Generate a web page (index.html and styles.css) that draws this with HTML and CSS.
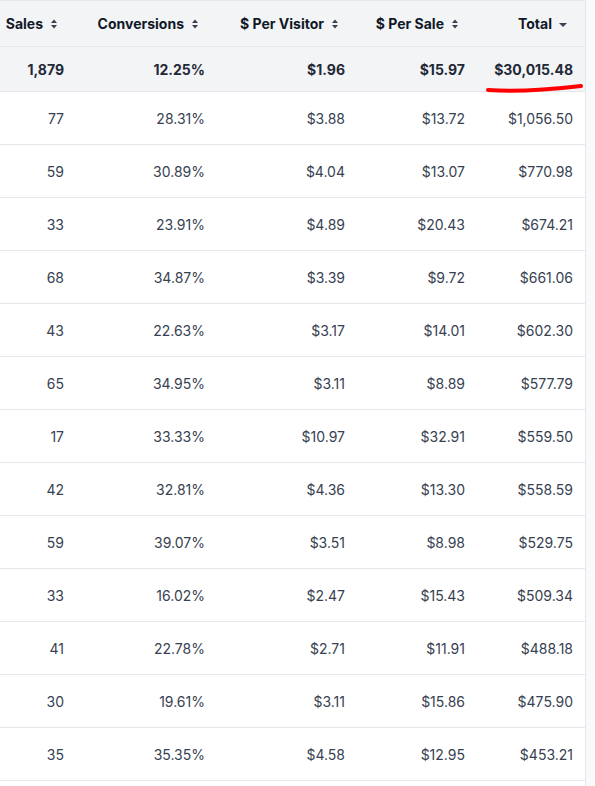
FILE: index.html
```html
<!DOCTYPE html>
<html lang="en">
<head>
  <meta charset="UTF-8">
  <meta name="viewport" content="width=device-width, initial-scale=1.0">
  <title>Sales Report</title>
  <link rel="stylesheet" href="styles.css">
</head>
<body>
  <div class="report">
    <table class="report-table">
      <colgroup>
        <col class="col-sales">
        <col class="col-conv">
        <col class="col-visitor">
        <col class="col-sale">
        <col class="col-total">
      </colgroup>
      <thead>
        <tr>
          <th><span class="th-inner">Sales <svg class="sort" viewBox="0 0 12 10"><path d="M6 0.5 L9 4 L3 4 Z M6 9.5 L9 6 L3 6 Z"/></svg></span></th>
          <th><span class="th-inner">Conversions <svg class="sort" viewBox="0 0 12 10"><path d="M6 0.5 L9 4 L3 4 Z M6 9.5 L9 6 L3 6 Z"/></svg></span></th>
          <th><span class="th-inner">$ Per Visitor <svg class="sort" viewBox="0 0 12 10"><path d="M6 0.5 L9 4 L3 4 Z M6 9.5 L9 6 L3 6 Z"/></svg></span></th>
          <th><span class="th-inner">$ Per Sale <svg class="sort" viewBox="0 0 12 10"><path d="M6 0.5 L9 4 L3 4 Z M6 9.5 L9 6 L3 6 Z"/></svg></span></th>
          <th><span class="th-inner">Total <svg class="sort" viewBox="0 0 12 10"><path d="M2 4 L10 4 L6 8 Z"/></svg></span></th>
        </tr>
      </thead>
      <tbody>
        <tr class="summary">
          <td>1,879</td>
          <td>12.25%</td>
          <td>$1.96</td>
          <td>$15.97</td>
          <td class="marked">$30,015.48
            <svg class="scribble" viewBox="0 0 100 12"><path d="M3 8 Q40 10.5 96 4"/></svg>
          </td>
        </tr>
        <tr><td>77</td><td>28.31%</td><td>$3.88</td><td>$13.72</td><td>$1,056.50</td></tr>
        <tr><td>59</td><td>30.89%</td><td>$4.04</td><td>$13.07</td><td>$770.98</td></tr>
        <tr><td>33</td><td>23.91%</td><td>$4.89</td><td>$20.43</td><td>$674.21</td></tr>
        <tr><td>68</td><td>34.87%</td><td>$3.39</td><td>$9.72</td><td>$661.06</td></tr>
        <tr><td>43</td><td>22.63%</td><td>$3.17</td><td>$14.01</td><td>$602.30</td></tr>
        <tr><td>65</td><td>34.95%</td><td>$3.11</td><td>$8.89</td><td>$577.79</td></tr>
        <tr><td>17</td><td>33.33%</td><td>$10.97</td><td>$32.91</td><td>$559.50</td></tr>
        <tr><td>42</td><td>32.81%</td><td>$4.36</td><td>$13.30</td><td>$558.59</td></tr>
        <tr><td>59</td><td>39.07%</td><td>$3.51</td><td>$8.98</td><td>$529.75</td></tr>
        <tr><td>33</td><td>16.02%</td><td>$2.47</td><td>$15.43</td><td>$509.34</td></tr>
        <tr><td>41</td><td>22.78%</td><td>$2.71</td><td>$11.91</td><td>$488.18</td></tr>
        <tr><td>30</td><td>19.61%</td><td>$3.11</td><td>$15.86</td><td>$475.90</td></tr>
        <tr><td>35</td><td>35.35%</td><td>$4.58</td><td>$12.95</td><td>$453.21</td></tr>
      </tbody>
    </table>
  </div>
</body>
</html>
```

FILE: styles.css
```css
body {
  margin: 0;
  padding: 0;
  background-color: #f8f9fb;
  font-family: Inter, "Noto Sans", Arial, sans-serif;
  color: #374151;
  overflow: hidden;
}
.report {
  width: 585px;
  min-height: 786px;
  background-color: #fff;
  border-right: 1px solid #e5e7eb;
}
.report-table {
  width: 585px;
  table-layout: fixed;
  border-collapse: collapse;
  font-size: 14px;
}
.col-sales { width: 76px; }
.col-conv { width: 141px; }
.col-visitor { width: 140px; }
.col-sale { width: 120px; }
.col-total { width: 108px; }
.report-table th {
  height: 45px;
  padding: 0 16px 0 0;
  background-color: #f3f4f6;
  border-top: 1px solid #e5e7eb;
  border-bottom: 1px solid #e5e7eb;
  text-align: right;
  font-weight: 700;
  color: #111827;
  white-space: nowrap;
}
.th-inner {
  display: inline-flex;
  align-items: center;
  gap: 5px;
}
.sort {
  width: 12px;
  height: 10px;
  fill: #374151;
}
.report-table td {
  height: 52px;
  padding: 0 12px 0 0;
  border-bottom: 1px solid #e5e7eb;
  text-align: right;
  white-space: nowrap;
}
.report-table .summary td {
  height: 44px;
  background-color: #f3f4f6;
  font-weight: 700;
  color: #1f2937;
}
.marked {
  position: relative;
}
.scribble {
  position: absolute;
  right: 0;
  top: 35px;
  width: 100px;
  height: 12px;
  overflow: visible;
}
.scribble path {
  fill: none;
  stroke: #f00;
  stroke-width: 4;
  stroke-linecap: round;
}
```
